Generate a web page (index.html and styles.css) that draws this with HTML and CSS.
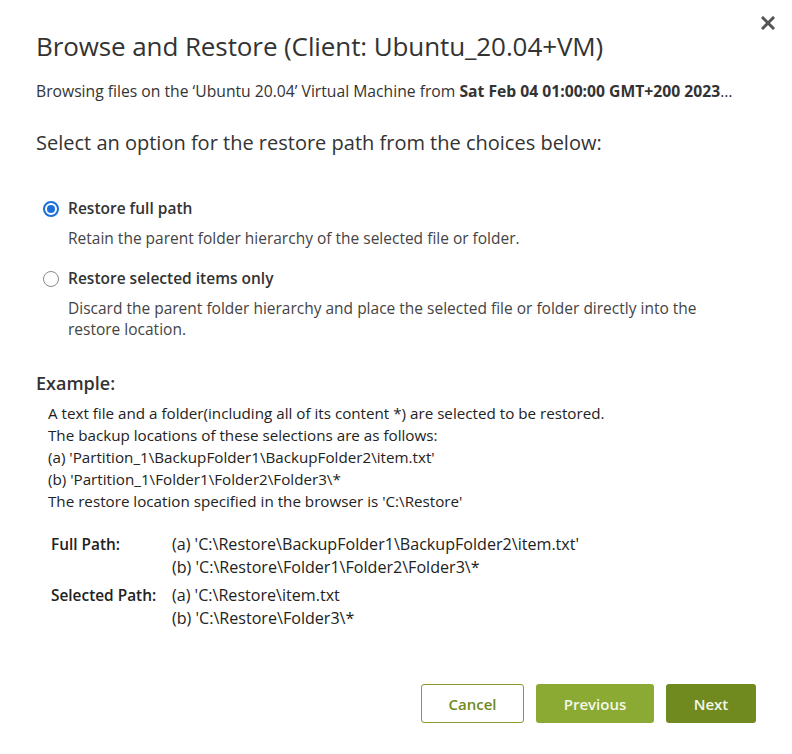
FILE: index.html
```html
<!DOCTYPE html>
<html lang="en">
<head>
<meta charset="utf-8">
<title>Browse and Restore</title>
<link rel="stylesheet" href="styles.css">
</head>
<body>
<div class="dialog">
  <button class="close" aria-label="Close">
    <svg width="14" height="14" viewBox="0 0 14 14"><path d="M2 2L12 12M12 2L2 12" stroke="#555" stroke-width="3" stroke-linecap="square"/></svg>
  </button>
  <h1 class="title">Browse and Restore (Client: Ubuntu_20.04+VM)</h1>
  <p class="subtitle">Browsing files on the ‘Ubuntu 20.04’ Virtual Machine from <b>Sat Feb 04 01:00:00 GMT+200 2023</b>…</p>
  <h2 class="question">Select an option for the restore path from the choices below:</h2>

  <div class="options">
    <label class="option">
      <span class="radio checked"></span>
      <span class="opt-body">
        <span class="opt-label">Restore full path</span>
        <span class="opt-desc">Retain the parent folder hierarchy of the selected file or folder.</span>
      </span>
    </label>
    <label class="option">
      <span class="radio"></span>
      <span class="opt-body">
        <span class="opt-label">Restore selected items only</span>
        <span class="opt-desc">Discard the parent folder hierarchy and place the selected file or folder directly into the restore location.</span>
      </span>
    </label>
  </div>

  <h3 class="example-title">Example:</h3>
  <div class="example">
    <p>A text file and a folder(including all of its content *) are selected to be restored.</p>
    <p>The backup locations of these selections are as follows:</p>
    <p>(a) 'Partition_1\BackupFolder1\BackupFolder2\item.txt'</p>
    <p>(b) 'Partition_1\Folder1\Folder2\Folder3\*</p>
    <p>The restore location specified in the browser is 'C:\Restore'</p>
  </div>

  <div class="paths">
    <div class="path-key">Full Path:</div>
    <div class="path-vals">
      <p>(a) 'C:\Restore\BackupFolder1\BackupFolder2\item.txt'</p>
      <p>(b) 'C:\Restore\Folder1\Folder2\Folder3\*</p>
    </div>
    <div class="path-key">Selected Path:</div>
    <div class="path-vals">
      <p>(a) 'C:\Restore\item.txt</p>
      <p>(b) 'C:\Restore\Folder3\*</p>
    </div>
  </div>

  <div class="actions">
    <button class="btn btn-outline">Cancel</button>
    <button class="btn btn-light">Previous</button>
    <button class="btn btn-dark">Next</button>
  </div>
</div>
</body>
</html>
```
FILE: styles.css
```css
* { box-sizing: border-box; }
html, body { margin: 0; padding: 0; background: #fff; }
body {
  font-family: "Open Sans", "Noto Sans", sans-serif;
  color: #333;
  width: 792px;
  height: 754px;
  overflow: hidden;
}
.dialog {
  position: relative;
  padding: 30px 36px 0 36px;
}
.close {
  position: absolute;
  top: 16px;
  right: 17px;
  width: 14px;
  height: 14px;
  padding: 0;
  border: 0;
  background: none;
  line-height: 0;
}
.title {
  margin: 0;
  font-size: 26px;
  font-weight: 400;
  line-height: 32px;
  color: #333;
  letter-spacing: -0.1px;
}
.subtitle {
  margin: 18px 0 0;
  font-size: 15.7px;
  line-height: 22px;
  color: #333;
}
.subtitle b { font-weight: 700; }
.question {
  margin: 28px 0 0;
  font-size: 20px;
  font-weight: 500;
  line-height: 26px;
  color: #333;
}
.options {
  margin-top: 41px;
  padding-left: 7px;
  display: flex;
  flex-direction: column;
  gap: 18px;
}
.option {
  display: flex;
  gap: 9px;
  align-items: flex-start;
}
.radio {
  flex: none;
  width: 16px;
  height: 16px;
  margin-top: 4px;
  border: 1.5px solid #8a8a8a;
  border-radius: 50%;
  background: #fff;
  position: relative;
}
.radio.checked {
  border: 2px solid #1a6fd8;
}
.radio.checked::after {
  content: "";
  position: absolute;
  left: 2px;
  top: 2px;
  width: 8px;
  height: 8px;
  border-radius: 50%;
  background: #1a6fd8;
}
.opt-body { display: flex; flex-direction: column; }
.opt-label {
  font-size: 15.5px;
  font-weight: 600;
  line-height: 22px;
  color: #333;
}
.opt-desc {
  margin-top: 9px;
  font-size: 15.5px;
  line-height: 21px;
  color: #444;
  max-width: 650px;
}
.example-title {
  margin: 31px 0 0;
  font-size: 18px;
  font-weight: 600;
  line-height: 24px;
  color: #333;
}
.example {
  margin-top: 7px;
  padding-left: 12px;
}
.example p {
  margin: 0;
  font-size: 15.2px;
  line-height: 22px;
  color: #222;
}
.paths {
  margin-top: 21px;
  padding-left: 15px;
  display: grid;
  grid-template-columns: 121px 1fr;
  row-gap: 5px;
}
.path-vals p {
  margin: 0;
  font-size: 16.1px;
  line-height: 23px;
  color: #222;
}
.path-key {
  font-size: 15.4px;
  font-weight: 600;
  line-height: 23px;
  color: #222;
}
.actions {
  position: absolute;
  top: 684px;
  right: 36px;
  display: flex;
  gap: 12px;
}
.btn {
  height: 39px;
  border-radius: 3px;
  font-family: "Open Sans", sans-serif;
  font-size: 15px;
  font-weight: 600;
  cursor: pointer;
}
.btn-outline {
  width: 103px;
  background: #fff;
  border: 1px solid #8a9a30;
  color: #6f8a1c;
}
.btn-light {
  width: 118px;
  background: #8aaa33;
  border: 0;
  color: #f4f8e8;
}
.btn-dark {
  width: 90px;
  background: #718a20;
  border: 0;
  color: #f4f8e8;
}
```
